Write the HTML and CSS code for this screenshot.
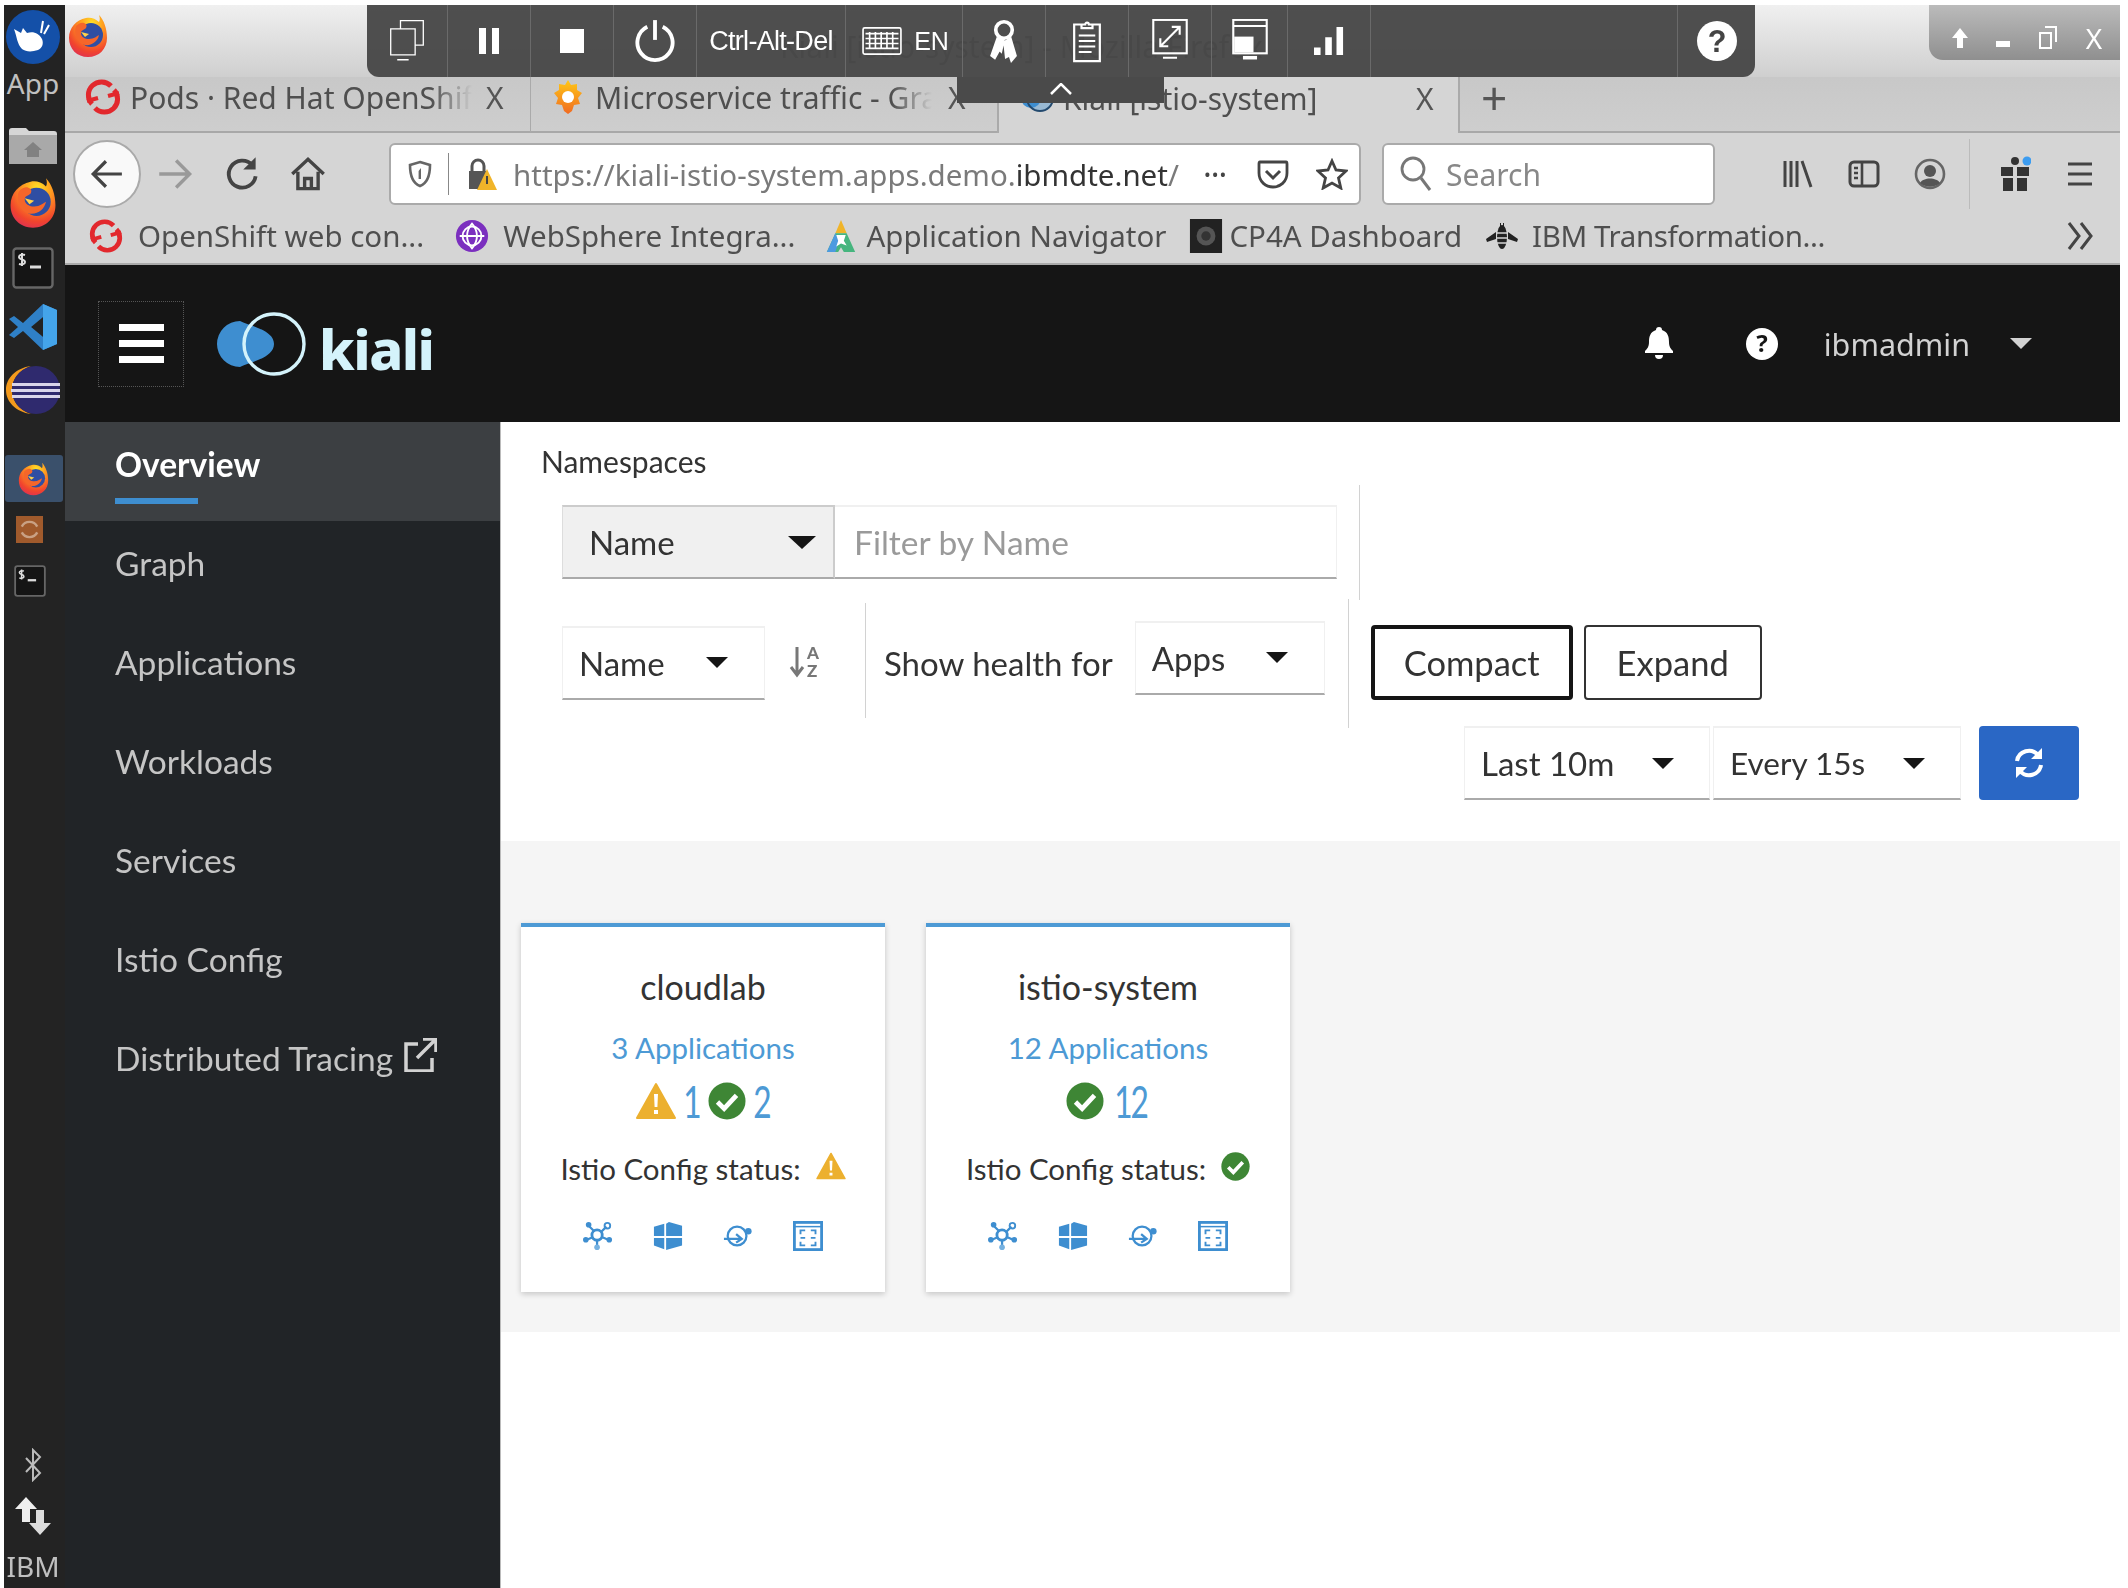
FILE: index.html
```html
<!DOCTYPE html>
<html lang="en">
<head>
    <meta charset="UTF-8">
    <meta name="viewport" content="width=device-width, initial-scale=1.0">
    <title>Kiali [istio-system]</title>
    <link rel="stylesheet" href="styles.css">
</head>
<body>
    <svg class="sprite" xmlns="http://www.w3.org/2000/svg">
        <defs>
            <radialGradient id="foxGrad" cx="0.6" cy="0.2" r="0.9">
                <stop offset="0" stop-color="#ffe226"/>
                <stop offset="0.35" stop-color="#ff9a1f"/>
                <stop offset="0.75" stop-color="#f1442d"/>
                <stop offset="1" stop-color="#d92c5d"/>
            </radialGradient>
            <linearGradient id="barGrad" x1="0" y1="0" x2="0" y2="1">
                <stop offset="0" stop-color="#ffc816"/>
                <stop offset="1" stop-color="#f06a22"/>
            </linearGradient>
            <symbol id="fox" viewBox="0 0 40 44">
                <path d="M31 1c1 3 1 5 0 7C27 4 22 3 18 4 8 6 1 14 1 24c0 11 8 19 19 19s19-8 19-19c0-9-3-18-8-23z" fill="url(#foxGrad)"/>
                <circle cx="23" cy="21" r="12" fill="#2f4ea3"/>
                <path d="M8 12c3-3 6-4 8-3 3 1 3 3 2 5-2 2-5 2-5 5 0 4 4 6 8 6 5 0 8-3 10-4-1 6-7 11-14 10C10 30 5 20 8 12z" fill="#f5662a"/>
                <path d="M13 18l8 2-4 3z" fill="#ffd24a"/>
            </symbol>
            <symbol id="openshift" viewBox="0 0 36 36">
                <path d="M7 25A13 13 0 0 1 26 7M29 11A13 13 0 0 1 10 29" fill="none" stroke="#e2282d" stroke-width="5"/>
                <path d="M2 22l11-3M23 17l11-3" stroke="#e2282d" stroke-width="4"/>
            </symbol>
            <symbol id="check" viewBox="0 0 40 40">
                <circle cx="20" cy="20" r="19.5" fill="#3e8635"/>
                <path d="M10 21l7 7 13-14" fill="none" stroke="#fff" stroke-width="5"/>
            </symbol>
            <symbol id="warn" viewBox="0 0 40 38">
                <path d="M20 2L39 36H1z" fill="#ecb02f" stroke="#ecb02f" stroke-width="2" stroke-linejoin="round"/>
                <path d="M18 12h4l-.6 13h-2.800zM18 28h4v4h-4z" fill="#fff"/>
            </symbol>
            <symbol id="nodes" viewBox="0 0 32 32">
                <circle cx="15" cy="15" r="5.500" fill="none" stroke="#3e8ed0" stroke-width="3"/>
                <path d="M6 5l6 6M25 6l-6 6M4 20l7-3M27 20l-7-3M15 28v-8" stroke="#3e8ed0" stroke-width="2.400"/>
                <circle cx="6" cy="4" r="3" fill="#3e8ed0"/><circle cx="26" cy="5" r="3" fill="none" stroke="#3e8ed0" stroke-width="2"/>
                <circle cx="3" cy="20" r="3" fill="#3e8ed0"/><circle cx="28" cy="20" r="3" fill="#3e8ed0"/><circle cx="15" cy="28" r="3" fill="#76b1e0"/>
            </symbol>
            <symbol id="cube" viewBox="0 0 32 32">
                <path d="M1 6l11-3v13H1zM14 3l3-2 14 4v11H14zM1 18h11v12L1 26zM14 18h17v8l-17 5z" fill="#3e8ed0"/>
            </symbol>
            <symbol id="orbit" viewBox="0 0 32 32">
                <circle cx="15" cy="16" r="10" fill="none" stroke="#3e8ed0" stroke-width="2.400"/>
                <path d="M1 19h18m-5-5l6 5-6 4" fill="none" stroke="#3e8ed0" stroke-width="2.400"/>
                <circle cx="27" cy="11" r="3.500" fill="#3e8ed0"/>
            </symbol>
            <symbol id="frame" viewBox="0 0 32 32">
                <rect x="1.500" y="1.500" width="29" height="29" fill="none" stroke="#3e8ed0" stroke-width="3"/>
                <path d="M2 6h28" stroke="#3e8ed0" stroke-width="1.600"/>
                <path d="M8 14v-4h5M19 10h5v4M8 18h5M19 18h5M8 22v4h5M19 26h5v-4" fill="none" stroke="#3e8ed0" stroke-width="2"/>
            </symbol>
            <symbol id="term" viewBox="0 0 42 42">
                <rect x="1.500" y="1.500" width="39" height="39" rx="3" fill="#151515" stroke="#666" stroke-width="2.400"/>
                <path d="M18 20h11" stroke="#ddd" stroke-width="3"/>
                <path d="M13 8c-3-1-6 0-6 2 0 3 6 2 6 5 0 2-3 3-6 2M10 6v13" fill="none" stroke="#ddd" stroke-width="2"/>
            </symbol>
        </defs>
    </svg>

    <!-- desktop panel on the left -->
    <aside class="dock">
        <div class="dock-top">
            <svg class="dock-app" viewBox="0 0 54 54">
                <circle cx="27" cy="27" r="27" fill="#1450a8"/>
                <path d="M8 19l7 4 2-5 4 5c6-2 12 0 15 6 2 5 0 9-4 11-6 2-12 2-16-1-5-5-5-12-8-20z" fill="#fff"/>
                <path d="M37 11l-2 12M43 15l-5 9" stroke="#fff" stroke-width="2"/>
            </svg>
            <span class="dock-label">App</span>
            <svg class="dock-folder" viewBox="0 0 50 38">
                <path d="M1 5q0-3 3-3h14l3 3h25q3 0 3 3v28H1z" fill="#d6d6d6"/>
                <path d="M1 9h48v29H1z" fill="#a9a9a9"/>
                <path d="M25 16l-9 8h3v7h12v-7h3z" fill="#818181"/>
            </svg>
            <svg class="dock-fox"><use href="#fox"/></svg>
            <svg class="dock-term"><use href="#term"/></svg>
            <svg class="dock-code" viewBox="0 0 48 46">
                <path d="M34 0l14 6v34l-14 6-20-19-9 7-5-3 9-8-9-8 5-3 9 7z" fill="#2f80c7"/>
                <path d="M34 0l14 6v34l-14 6zM34 13L22 23l12 10z" fill="#44a4ea"/>
                <path d="M34 13L22 23l12 10z" fill="#222"/>
            </svg>
            <svg class="dock-eclipse" viewBox="0 0 54 48">
                <path d="M25 0C10 2 0 12 0 24s10 22 25 24C13 44 6 35 6 24S13 4 25 0z" fill="#f39a1d"/>
                <circle cx="30" cy="24" r="24" fill="#2f2a6e"/>
                <path d="M6 17h48v3H6zM5 23h49v3H5zM6 29h48v3H6z" fill="#d9d5ea"/>
            </svg>
            <div class="dock-active"><svg class="dock-fox-small"><use href="#fox"/></svg></div>
            <div class="dock-sync">
                <svg viewBox="0 0 28 28"><path d="M6 11a9 9 0 0 1 16 0M22 17a9 9 0 0 1-16 0" fill="none" stroke="#c9a184" stroke-width="2.500"/></svg>
            </div>
            <svg class="dock-term-small"><use href="#term"/></svg>
        </div>
        <div class="dock-bottom">
            <svg class="dock-bt" viewBox="0 0 18 34"><path d="M2 10l14 15-7 7V2l7 7L2 24" fill="none" stroke="#bbb" stroke-width="2"/></svg>
            <svg class="dock-net" viewBox="0 0 38 38"><path d="M12 0l11 12h-7v13H8V12H1z" fill="#eee"/><path d="M26 38L15 26h7V13h8v13h7z" fill="#ddd"/></svg>
            <span class="dock-label dock-ibm">IBM</span>
        </div>
    </aside>

    <div class="window">
        <!-- firefox window -->
        <div class="browser">
            <div class="titlebar">
                <svg class="title-fox"><use href="#fox"/></svg>
                <span class="title-text">Kiali [istio-system] - Mozilla Firefox</span>
                <div class="win-controls">
                    <svg viewBox="0 0 18 22" class="win-up"><path d="M9 1l8 10h-5v10H6V11H1z" fill="#fff"/></svg>
                    <span class="win-min"></span>
                    <svg viewBox="0 0 20 24" class="win-restore"><path d="M7 1h11v15M2 7h11v15H2z" fill="none" stroke="#fff" stroke-width="2"/></svg>
                    <span class="win-x">X</span>
                </div>
            </div>
            <div class="tabs">
                <div class="tab tab-first">
                    <svg class="tab-icon"><use href="#openshift"/></svg>
                    <span class="tab-text">Pods · Red Hat OpenShift</span>
                    <span class="tab-close">X</span>
                </div>
                <div class="tab tab-second">
                    <svg class="tab-icon" viewBox="0 0 30 36">
                        <path d="M15 1l3 5 6-1 0 6 5 3-4 5 2 6-6 1-2 6-4 3-4-3-2-6-6-1 2-6-4-5 5-3V5l6 1z" fill="url(#barGrad)"/>
                        <circle cx="15" cy="18" r="6" fill="#fff"/>
                    </svg>
                    <span class="tab-text">Microservice traffic - Grafana</span>
                    <span class="tab-close">X</span>
                </div>
                <div class="tab tab-active">
                    <svg class="tab-icon" viewBox="0 0 36 30">
                        <circle cx="11" cy="15" r="10" fill="#3e8ed0"/><circle cx="20" cy="15" r="13" fill="#3e8ed0" fill-opacity=".4" stroke="#234a6f" stroke-width="2"/>
                    </svg>
                    <span class="tab-text">Kiali [istio-system]</span>
                    <span class="tab-close">X</span>
                </div>
                <span class="tab-new">+</span>
            </div>
            <div class="nav">
                <div class="back">
                    <svg viewBox="0 0 32 32"><path d="M30 16H4M15 4L3 16l12 12" fill="none" stroke="#444" stroke-width="3"/></svg>
                </div>
                <svg class="nav-icon forward" viewBox="0 0 32 32"><path d="M2 16h26M17 4l12 12-12 12" fill="none" stroke="#999" stroke-width="3"/></svg>
                <svg class="nav-icon reload" viewBox="0 0 32 32"><path d="M26 8a12 12 0 1 0 3 10" fill="none" stroke="#444" stroke-width="3.400"/><path d="M29 1v11H18z" fill="#444"/></svg>
                <svg class="nav-icon home" viewBox="0 0 32 32"><path d="M2 16L16 3l14 13M7 14v15h18V14M13 29v-9h6v9" fill="none" stroke="#444" stroke-width="3"/></svg>
                <div class="urlbar">
                    <svg class="url-shield" viewBox="0 0 24 28"><path d="M12 2l10 3c0 10-2 18-10 21C4 23 2 15 2 5z" fill="none" stroke="#666" stroke-width="2.600"/><path d="M13 8v11h-2.400V11z" fill="#666"/></svg>
                    <span class="url-sep"></span>
                    <svg class="url-lock" viewBox="0 0 30 34"><path d="M5 14V9a6 6 0 0 1 12 0v5" fill="none" stroke="#555" stroke-width="3"/><path d="M2 14h18v18H2z" fill="#555"/><path d="M20 12l10 21H10z" fill="#f0b429"/><path d="M19 19h2v8h-2z" fill="#444"/></svg>
                    <span class="url-text">https://kiali-istio-system.apps.demo.<b>ibmdte.net</b>/</span>
                    <span class="url-dots">•••</span>
                    <svg class="url-icon url-pocket" viewBox="0 0 32 32"><path d="M3 4h26q1 0 1 2v9c0 9-7 14-14 14S2 24 2 15V6q0-2 1-2z" fill="none" stroke="#444" stroke-width="2.800"/><path d="M9 13l7 7 7-7" fill="none" stroke="#444" stroke-width="3"/></svg>
                    <svg class="url-icon url-star" viewBox="0 0 32 32"><path d="M16 3l4 9 10 1-7.500 7 2.300 10L16 25l-8.800 5 2.300-10L2 13l10-1z" fill="none" stroke="#444" stroke-width="2.800"/></svg>
                </div>
                <div class="searchbar">
                    <svg class="search-icon" viewBox="0 0 32 36"><circle cx="13" cy="13" r="11" fill="none" stroke="#777" stroke-width="2.800"/><path d="M21 22l9 12" stroke="#777" stroke-width="3"/></svg>
                    <span>Search</span>
                </div>
                <svg class="tool-icon tool-first" viewBox="0 0 32 32"><path d="M3 3v26M9 3v26M15 3v26M20 3l9 26" fill="none" stroke="#444" stroke-width="3"/></svg>
                <svg class="tool-icon" viewBox="0 0 32 32"><rect x="2" y="4" width="28" height="24" rx="4" fill="none" stroke="#444" stroke-width="3"/><path d="M14 4v24M6 10h4M6 15h4M6 20h4" stroke="#444" stroke-width="2.600"/></svg>
                <svg class="tool-icon" viewBox="0 0 32 32"><circle cx="16" cy="16" r="14" fill="none" stroke="#666" stroke-width="2.600"/><circle cx="16" cy="13" r="6" fill="#555"/><path d="M6 25c3-6 17-6 20 0-6 5-14 5-20 0z" fill="#555"/></svg>
                <span class="tool-sep"></span>
                <div class="gift">
                    <svg class="tool-icon" viewBox="0 0 32 36"><path d="M2 11h12v9H2zM18 11h12v9H18zM4 22h10v13H4zM18 22h10v13H18z" fill="#333"/><circle cx="16" cy="5" r="4" fill="#333"/><circle cx="28" cy="5" r="4.500" fill="#3c9cf0"/></svg>
                </div>
                <svg class="tool-icon tool-menu" viewBox="0 0 32 32"><path d="M4 6h24M4 16h24M4 26h24" stroke="#444" stroke-width="3.200"/></svg>
            </div>
            <div class="bookmarks">
                <div class="bm bm-1"><svg class="bm-icon"><use href="#openshift"/></svg><span>OpenShift web con...</span></div>
                <div class="bm bm-2">
                    <svg class="bm-icon" viewBox="0 0 36 36"><circle cx="18" cy="18" r="17" fill="#7b2fbf"/><circle cx="18" cy="18" r="10" fill="none" stroke="#fff" stroke-width="2"/><path d="M18 5c-7 8-7 18 0 26 7-8 7-18 0-26zM5 18h26" fill="none" stroke="#fff" stroke-width="2"/></svg>
                    <span>WebSphere Integra...</span>
                </div>
                <div class="bm bm-3">
                    <svg class="bm-icon" viewBox="0 0 30 36"><path d="M15 1l6 14H9z" fill="#f0b429"/><path d="M9 15h12l9 20H18l-3-5-3 5H0z" fill="#46b57e"/><path d="M0 35l9-20 4 8-4 12z" fill="#4d9ae0"/><path d="M10 17h10l-2 6 3 5-6-2-5 3 2-6z" fill="#fff"/></svg>
                    <span>Application Navigator</span>
                </div>
                <div class="bm bm-4">
                    <svg class="bm-icon" viewBox="0 0 34 36"><rect width="34" height="36" fill="#222"/><circle cx="17" cy="18" r="10" fill="#555"/><circle cx="17" cy="18" r="5" fill="#333"/></svg>
                    <span>CP4A Dashboard</span>
                </div>
                <div class="bm bm-5">
                    <svg class="bm-icon" viewBox="0 0 34 28"><ellipse cx="17" cy="15" rx="5" ry="12" fill="#222"/><path d="M11 11h12M11 16h12M12 21h10" stroke="#d5d5d5" stroke-width="1.600"/><path d="M11 10L1 17l1 3 9-3zM23 10l10 7-1 3-9-3zM15 1h1v4h-1zM18 1h1v4h-1z" fill="#222"/></svg>
                    <span>IBM Transformation...</span>
                </div>
                <svg class="bm-more" viewBox="0 0 30 32"><path d="M3 3l10 13L3 29M15 3l10 13-10 13" fill="none" stroke="#444" stroke-width="3"/></svg>
            </div>
        </div>

        <!-- kiali page -->
        <header class="masthead">
            <div class="burger"><span></span><span></span><span></span></div>
            <svg class="logo" viewBox="0 0 92 64">
                <path d="M24 9A22 22 0 1 0 24 55C34 50 58 46 58 32S34 14 24 9z" fill="#3e8ed0"/>
                <circle cx="58" cy="32" r="30" fill="none" stroke="#d4f3fb" stroke-width="3.400"/>
            </svg>
            <span class="logo-text">kiali</span>
            <svg class="head-bell" viewBox="0 0 30 34"><path d="M15 0a3 3 0 0 1 3 3c6 2 7 7 7 12 0 5 2 7 4 9v2H1v-2c2-2 4-4 4-9 0-5 1-10 7-12a3 3 0 0 1 3-3zM11 28h8a4 4 0 0 1-8 0z" fill="#fff"/></svg>
            <svg class="head-help" viewBox="0 0 32 32"><circle cx="16" cy="16" r="16" fill="#fff"/><text x="16" y="24" class="help-mark">?</text></svg>
            <span class="head-user">ibmadmin</span>
            <span class="caret caret-light"></span>
        </header>
        <div class="body-row">
            <nav class="sidebar">
                <a class="side-item side-current"><span class="side-label">Overview</span></a>
                <a class="side-item">Graph</a>
                <a class="side-item">Applications</a>
                <a class="side-item">Workloads</a>
                <a class="side-item">Services</a>
                <a class="side-item">Istio Config</a>
                <a class="side-item">Distributed Tracing
                    <svg class="side-ext" viewBox="0 0 34 34"><path d="M15 6H3v27h26V20" fill="none" stroke="#d2d2d2" stroke-width="3.500"/><path d="M20 1h13v13M32 2L14 20" fill="none" stroke="#d2d2d2" stroke-width="3.500"/></svg>
                </a>
            </nav>
            <main class="content">
                <div class="controls">
                    <div class="crumb">Namespaces</div>
                    <div class="filter-row">
                        <div class="filter-type">Name <span class="caret caret-big"></span></div>
                        <div class="filter-input">Filter by Name</div>
                        <span class="vline vline-filter"></span>
                    </div>
                    <div class="sort-row">
                        <div class="select select-sort">Name <span class="caret"></span></div>
                        <svg class="sort-icon" viewBox="0 0 30 34"><path d="M8 2v26M2 22l6 8 6-8" fill="none" stroke="#777" stroke-width="3"/><text x="18" y="14" class="sort-a">A</text><text x="18" y="32" class="sort-a">Z</text></svg>
                        <span class="vline vline-sort"></span>
                        <span class="health-label">Show health for</span>
                        <div class="select select-apps">Apps <span class="caret"></span></div>
                        <span class="vline vline-view"></span>
                        <button class="view-btn view-on">Compact</button>
                        <button class="view-btn view-off">Expand</button>
                    </div>
                    <div class="time-row">
                        <div class="select select-time">Last 10m <span class="caret"></span></div>
                        <div class="select select-every">Every 15s <span class="caret"></span></div>
                        <button class="refresh">
                            <svg viewBox="0 0 34 34"><path d="M5 15A12 12 0 0 1 26 9M29 19A12 12 0 0 1 8 25" fill="none" stroke="#fff" stroke-width="4"/><path d="M30 2v11H19zM4 32V21h11z" fill="#fff"/></svg>
                        </button>
                    </div>
                </div>
                <section class="cards">
                    <article class="card">
                        <h3>cloudlab</h3>
                        <div class="card-apps">3 Applications</div>
                        <div class="card-health">
                            <svg class="h-warn"><use href="#warn"/></svg><span>1</span>
                            <svg class="h-ok"><use href="#check"/></svg><span>2</span>
                        </div>
                        <div class="card-config">Istio Config status: <svg class="c-warn"><use href="#warn"/></svg></div>
                        <div class="card-links">
                            <svg><use href="#nodes"/></svg><svg><use href="#cube"/></svg><svg><use href="#orbit"/></svg><svg><use href="#frame"/></svg>
                        </div>
                    </article>
                    <article class="card">
                        <h3>istio-system</h3>
                        <div class="card-apps">12 Applications</div>
                        <div class="card-health">
                            <svg class="h-ok"><use href="#check"/></svg><span>12</span>
                        </div>
                        <div class="card-config">Istio Config status: <svg class="c-ok"><use href="#check"/></svg></div>
                        <div class="card-links">
                            <svg><use href="#nodes"/></svg><svg><use href="#cube"/></svg><svg><use href="#orbit"/></svg><svg><use href="#frame"/></svg>
                        </div>
                    </article>
                </section>
            </main>
        </div>
    </div>

    <!-- remote console toolbar over the window -->
    <div class="console">
        <span class="con-cell con-w"><svg viewBox="0 0 44 54" class="con-icon"><path d="M14 12V2h28v30H32M2 12h30v32H2zM10 50h14" fill="none" stroke="#fff" stroke-width="1.600"/></svg></span>
        <span class="con-cell"><span class="con-pause"></span></span>
        <span class="con-cell"><span class="con-stop"></span></span>
        <span class="con-cell"><svg viewBox="0 0 36 40" class="con-icon"><path d="M11 7a16 16 0 1 0 14 0" fill="none" stroke="#fff" stroke-width="3.500"/><path d="M18 1v18" stroke="#fff" stroke-width="3.500"/></svg></span>
        <span class="con-cell con-text">Ctrl-Alt-Del</span>
        <span class="con-cell con-kbd">
            <svg viewBox="0 0 48 34" class="con-kbd-icon"><rect x="1" y="1" width="46" height="32" rx="2" fill="none" stroke="#fff" stroke-width="2"/><path d="M4 8h40M4 14h40M4 20h40M4 26h40M9 6v20M16 6v20M23 6v20M30 6v20M37 6v20" stroke="#fff" stroke-width="2"/></svg>
            EN
        </span>
        <span class="con-cell"><svg viewBox="0 0 34 48" class="con-icon"><circle cx="17" cy="12" r="9" fill="none" stroke="#fff" stroke-width="4"/><path d="M10 20L3 40l4 3 5-9 2 2 3-14M24 20l6 20-5 6-2-6-4 2-2-18" fill="#fff" stroke="#fff" stroke-width="2"/></svg></span>
        <span class="con-cell"><svg viewBox="0 0 32 48" class="con-icon"><path d="M10 6H2v40h28V6h-8M10 10V6h4a2 2 0 0 1 4 0h4v4zM7 18h18M7 24h18M7 30h18M7 36h14" fill="none" stroke="#fff" stroke-width="2.400"/></svg></span>
        <span class="con-cell"><svg viewBox="0 0 40 50" class="con-icon"><rect x="1" y="1" width="38" height="38" fill="none" stroke="#fff" stroke-width="2.400"/><path d="M10 30L30 10M22 9h9v9M9 22v9h9M12 44h16" fill="none" stroke="#fff" stroke-width="2.400"/></svg></span>
        <span class="con-cell con-n"><svg viewBox="0 0 40 50" class="con-icon"><rect x="1" y="1" width="38" height="38" fill="none" stroke="#fff" stroke-width="2.400"/><path d="M1 8h38" stroke="#fff" stroke-width="2.400"/><path d="M2 20h22v18H2z" fill="#fff"/><path d="M12 44h16" stroke="#fff" stroke-width="4"/></svg></span>
        <span class="con-cell"><svg viewBox="0 0 34 32" class="con-bars"><path d="M1 23h7v8H1zM13 12h7v19h-7zM25 1h7v30h-7z" fill="#fff"/></svg></span>
        <span class="con-spacer"></span>
        <span class="con-cell con-help"><svg viewBox="0 0 34 34" class="con-icon"><circle cx="17" cy="17" r="17" fill="#fff"/><text x="17" y="26" class="help-mark help-mark-dark">?</text></svg></span>
    </div>
    <div class="console-tab"><svg viewBox="0 0 22 12"><path d="M1 11L11 1l10 10" fill="none" stroke="#fff" stroke-width="2.500"/></svg></div>
</body>
</html>
```

FILE: styles.css
```css
html, body {
    margin: 0;
    height: 100%;
}

body {
    display: flex;
    width: 2128px;
    height: 1588px;
    padding: 5px 8px 0 4px;
    box-sizing: border-box;
    background-color: #fff;
    overflow: hidden;
    font-family: "Noto Sans", sans-serif;
    /* the source is a scaled-up remote desktop capture */
    filter: blur(0.5px);
}

.sprite {
    width: 0;
    height: 0;
    flex: none;
}

/* desktop dock */
.dock {
    width: 61px;
    flex: none;
    box-sizing: border-box;
    padding-right: 3px;
    background-color: #232323;
    display: flex;
    flex-direction: column;
    justify-content: space-between;
    align-items: center;
}

.dock-top, .dock-bottom {
    display: flex;
    flex-direction: column;
    align-items: center;
    width: 100%;
}

.dock-app {
    width: 54px;
    height: 54px;
    margin-top: 5px;
}

.dock-label {
    color: #c0c0c0;
    font-size: 28px;
    line-height: 30px;
    margin-top: 4px;
}

.dock-folder {
    width: 50px;
    height: 38px;
    margin-top: 28px;
}

.dock-fox {
    width: 50px;
    height: 52px;
    margin-top: 13px;
}

.dock-term {
    width: 42px;
    height: 42px;
    margin-top: 18px;
}

.dock-code {
    width: 48px;
    height: 46px;
    margin-top: 15px;
}

.dock-eclipse {
    width: 54px;
    height: 48px;
    margin-top: 16px;
}

.dock-active {
    width: 58px;
    height: 47px;
    margin-top: 41px;
    margin-left: 1px;
    background-color: #3a506b;
    border-radius: 3px;
    display: flex;
    align-items: center;
    justify-content: center;
}

.dock-fox-small {
    width: 33px;
    height: 34px;
}

.dock-sync {
    width: 27px;
    height: 27px;
    margin-top: 14px;
    margin-right: 8px;
    background-color: #a05a2c;
    display: flex;
}

.dock-term-small {
    width: 32px;
    height: 32px;
    margin-top: 22px;
    margin-right: 6px;
}

.dock-bt {
    width: 18px;
    height: 34px;
}

.dock-net {
    width: 38px;
    height: 38px;
    margin-top: 15px;
}

.dock-ibm {
    font-size: 28px;
    margin-top: 16px;
    margin-bottom: 7px;
}

/* window */
.window {
    flex: 1;
    display: flex;
    flex-direction: column;
    min-width: 0;
}

.browser {
    height: 260px;
    flex: none;
    background-color: #d5d5d5;
    color: #4f4f4f;
    border-bottom: 2px solid #aaa;
    box-sizing: border-box;
}

.titlebar {
    height: 72px;
    display: flex;
    align-items: flex-start;
    background: linear-gradient(#f0f0f0, #cfcfcf);
}

.title-fox {
    width: 40px;
    height: 44px;
    margin: 9px 0 0 3px;
    flex: none;
}

.title-text {
    margin: 22px 0 0 672px;
    font-size: 30px;
    line-height: 40px;
    color: #777;
    white-space: nowrap;
}

.win-controls {
    margin-left: auto;
    width: 191px;
    height: 55px;
    box-sizing: border-box;
    display: flex;
    align-items: center;
    justify-content: space-around;
    padding: 10px 4px 0 8px;
    border-radius: 0 0 0 14px;
    background: linear-gradient(#bbb, #8f8f8f);
    color: #fff;
}

.win-up {
    width: 18px;
    height: 22px;
}

.win-min {
    width: 14px;
    height: 6px;
    margin-top: 12px;
    background-color: #fff;
}

.win-restore {
    width: 20px;
    height: 24px;
}

.win-x {
    font-size: 28px;
    line-height: 30px;
}

.tabs {
    height: 56px;
    display: flex;
    align-items: stretch;
    background: linear-gradient(#c8c8c8, #cecece);
    font-size: 30px;
    white-space: nowrap;
}

.tab {
    display: flex;
    align-items: center;
    box-sizing: border-box;
    padding-bottom: 14px;
    border-bottom: 2px solid #a8a8a8;
    overflow: hidden;
}

.tab-first {
    width: 466px;
    padding-left: 20px;
    border-right: 1px solid #aaa;
}

.tab-second {
    width: 466px;
    padding-left: 19px;
}

.tab-active {
    width: 463px;
    padding-left: 21px;
    border-bottom: none;
    background-color: #d5d5d5;
    border-left: 2px solid #aaa;
    border-right: 2px solid #aaa;
}

.tab-icon {
    width: 36px;
    height: 36px;
    flex: none;
}

.tab-text {
    width: 342px;
    flex: none;
    margin-left: 9px;
    overflow: hidden;
    -webkit-mask-image: linear-gradient(to right, #000 88%, transparent 100%);
    mask-image: linear-gradient(to right, #000 88%, transparent 100%);
}

.tab-second .tab-text {
    margin-left: 9px;
    width: 337px;
}

.tab-close {
    flex: none;
    margin-left: 14px;
    color: #555;
}

.tab-second .tab-close {
    margin-left: 16px;
}

.tab-active .tab-text {
    margin-left: 7px;
    width: 339px;
    -webkit-mask-image: none;
    mask-image: none;
}

.tab-new {
    flex: 1;
    padding-left: 21px;
    font-size: 46px;
    line-height: 40px;
    color: #555;
    border-bottom: 2px solid #a8a8a8;
}

.nav {
    height: 82px;
    display: flex;
    align-items: center;
    padding-left: 8px;
}

.back {
    width: 68px;
    height: 68px;
    box-sizing: border-box;
    border: 2px solid #aaa;
    border-radius: 50%;
    background-color: #f9f9f9;
    display: flex;
    align-items: center;
    justify-content: center;
    flex: none;
}

.back svg {
    width: 34px;
    height: 34px;
}

.nav-icon {
    width: 36px;
    height: 36px;
    flex: none;
}

.forward {
    margin-left: 16px;
}

.reload {
    margin-left: 30px;
}

.home {
    margin-left: 31px;
}

.urlbar {
    width: 972px;
    height: 62px;
    margin-left: 63px;
    flex: none;
    box-sizing: border-box;
    background-color: #fff;
    border: 2px solid #aaa;
    border-radius: 6px;
    display: flex;
    align-items: center;
    font-size: 29.500px;
    color: #7a7a7a;
    white-space: nowrap;
}

.url-text b {
    font-weight: 400;
    color: #333;
}

.url-shield {
    width: 24px;
    height: 28px;
    margin-left: 17px;
    flex: none;
}

.url-sep {
    width: 1px;
    height: 42px;
    margin-left: 16px;
    background-color: #888;
}

.url-lock {
    width: 30px;
    height: 34px;
    margin-left: 18px;
    flex: none;
}

.url-text {
    margin-left: 16px;
    width: 676px;
    flex: none;
    overflow: hidden;
}

.url-dots {
    margin-left: 15px;
    font-size: 18px;
    letter-spacing: 1px;
    color: #444;
}

.url-icon {
    width: 32px;
    height: 32px;
    flex: none;
}

.url-pocket {
    margin-left: 30px;
}

.url-star {
    margin-left: 27px;
}

.searchbar {
    width: 333px;
    height: 62px;
    margin-left: 21px;
    flex: none;
    box-sizing: border-box;
    background-color: #fff;
    border: 2px solid #aaa;
    border-radius: 6px;
    display: flex;
    align-items: center;
    padding-left: 16px;
    font-size: 30px;
    color: #888;
}

.search-icon {
    width: 32px;
    height: 36px;
    margin-right: 14px;
}

.tool-icon {
    width: 32px;
    height: 32px;
    flex: none;
    margin-left: 34px;
}

.tool-first {
    margin-left: 67px;
}

.tool-sep {
    width: 1px;
    height: 70px;
    margin-left: 23px;
    background-color: #bbb;
}

.gift .tool-icon {
    margin-left: 29px;
    height: 36px;
    display: block;
}

.tool-menu {
    margin-left: 33px;
}

.bookmarks {
    height: 48px;
    display: flex;
    align-items: center;
    padding-bottom: 7px;
    box-sizing: border-box;
    font-size: 29.500px;
    white-space: nowrap;
}

.bm {
    display: flex;
    align-items: center;
    flex: none;
}

.bm-icon {
    width: 34px;
    height: 34px;
    flex: none;
}

.bm-1 {
    margin-left: 24px;
    gap: 15px;
}

.bm-2 {
    margin-left: 31px;
    gap: 14px;
}

.bm-3 {
    margin-left: 29px;
    gap: 8px;
}

.bm-4 {
    margin-left: 23px;
    gap: 6px;
}

.bm-5 {
    margin-left: 23px;
    gap: 13px;
    letter-spacing: -0.4px;
}

.bm-more {
    width: 30px;
    height: 32px;
    margin-left: auto;
    margin-right: 24px;
}

/* kiali masthead */
.masthead {
    height: 157px;
    flex: none;
    background-color: #151515;
    display: flex;
    align-items: center;
    color: #d2d2d2;
}

.burger {
    width: 86px;
    height: 86px;
    margin-left: 33px;
    box-sizing: border-box;
    border: 1px dotted #555;
    display: flex;
    flex-direction: column;
    align-items: center;
    justify-content: center;
    gap: 9px;
}

.burger span {
    width: 45px;
    height: 7px;
    background-color: #fff;
}

.logo {
    width: 92px;
    height: 64px;
    margin-left: 32px;
}

.logo-text {
    margin: 8px 0 0 11px;
    font-size: 56px;
    line-height: 60px;
    font-weight: 800;
    color: #d4f3fb;
    letter-spacing: -1.5px;
}

.head-bell {
    width: 30px;
    height: 34px;
    margin-left: auto;
}

.head-help {
    width: 32px;
    height: 32px;
    margin-left: 72px;
}

.help-mark {
    font-size: 24px;
    font-weight: 700;
    text-anchor: middle;
    fill: #151515;
}

.help-mark-dark {
    font-size: 26px;
    fill: #444;
}

.head-user {
    margin-left: 46px;
    font-size: 30.500px;
}

.caret {
    display: inline-block;
    width: 0;
    height: 0;
    border-left: 11px solid transparent;
    border-right: 11px solid transparent;
    border-top: 11px solid #151515;
}

.caret-light {
    border-top-color: #d2d2d2;
    margin-left: 40px;
    margin-right: 88px;
}

.caret-big {
    border-left-width: 14px;
    border-right-width: 14px;
    border-top-width: 13px;
}

/* sidebar and main */
.body-row {
    flex: 1;
    display: flex;
    min-height: 0;
}

.sidebar {
    width: 435px;
    flex: none;
    background-color: #212427;
    color: #c5c5c5;
    font-size: 33.500px;
    font-family: "Lato", sans-serif;
}

.side-item {
    height: 99px;
    box-sizing: border-box;
    display: flex;
    align-items: center;
    padding: 0 0 16px 50px;
    gap: 10px;
    line-height: 40px;
    white-space: nowrap;
}

.side-current {
    background-color: #3c3f42;
    color: #fff;
    font-weight: 700;
}

.side-label {
    position: relative;
}

.side-label::after {
    content: "";
    position: absolute;
    left: 0;
    width: 83px;
    top: 54px;
    height: 6px;
    background-color: #3e8ed0;
}

.side-ext {
    width: 34px;
    height: 34px;
    margin-top: -6px;
}

.content {
    flex: 1;
    min-width: 0;
    display: flex;
    flex-direction: column;
    border-left: 1px solid #bbb;
    font-family: "Lato", sans-serif;
    color: #333;
}

.controls {
    height: 419px;
    flex: none;
    padding: 0 41px 0 40px;
    box-sizing: border-box;
    font-size: 31px;
}

.crumb {
    padding-top: 21px;
    font-size: 30px;
    line-height: 36px;
}

.filter-row {
    display: flex;
    margin: 26px 0 0 21px;
    height: 74px;
}

.filter-type {
    width: 273px;
    box-sizing: border-box;
    padding: 0 17px 0 26px;
    background-color: #f0f0f0;
    border-top: 2px solid #ccc;
    border-bottom: 2px solid #aaa;
    border-left: 1px solid #ddd;
    border-right: 2px solid #ccc;
    display: flex;
    align-items: center;
    justify-content: space-between;
    font-size: 33px;
}

.filter-input {
    width: 502px;
    box-sizing: border-box;
    padding-left: 19px;
    border-top: 2px solid #f0f0f0;
    border-right: 1px solid #f0f0f0;
    border-bottom: 2px solid #aaa;
    display: flex;
    align-items: center;
    color: #9a9a9a;
    font-size: 33.500px;
}

.vline {
    width: 1px;
    flex: none;
    background-color: #d2d2d2;
}

.vline-filter {
    height: 115px;
    margin: -20px 0 0 22px;
}

.sort-row {
    display: flex;
    align-items: center;
    margin: 19px 0 0 21px;
    height: 115px;
}

.select {
    box-sizing: border-box;
    height: 74px;
    display: flex;
    align-items: center;
    justify-content: space-between;
    flex: none;
    border-top: 2px solid #f0f0f0;
    border-left: 1px solid #f0f0f0;
    border-right: 1px solid #f0f0f0;
    border-bottom: 2px solid #aaa;
    font-size: 33px;
}

.select-sort {
    width: 203px;
    padding: 0 36px 0 16px;
    margin-top: 14px;
}

.sort-icon {
    width: 30px;
    height: 34px;
    margin: 12px 0 0 24px;
}

.sort-a {
    font-size: 17px;
    font-weight: 900;
    fill: #777;
}

.vline-sort {
    height: 115px;
    margin: 10px 0 0 46px;
}

.health-label {
    margin: 14px 0 0 18px;
    white-space: nowrap;
    font-size: 33px;
}

.select-apps {
    width: 190px;
    padding: 0 36px 0 16px;
    margin: 4px 0 0 22px;
}

.vline-view {
    height: 129px;
    margin: 16px 0 0 23px;
}

.view-btn {
    height: 75px;
    box-sizing: border-box;
    margin-top: 14px;
    background-color: #fff;
    color: #333;
    border-radius: 4px;
    font-family: inherit;
    font-size: 34.500px;
    padding: 0;
}

.view-on {
    width: 202px;
    margin-left: 22px;
    border: 4px solid #151515;
}

.view-off {
    width: 178px;
    margin-left: 11px;
    border: 2px solid #333;
}

.time-row {
    display: flex;
    justify-content: flex-end;
    margin-top: 13px;
    height: 74px;
    gap: 3px;
}

.select-time {
    width: 246px;
    padding: 0 35px 0 16px;
}

.select-every {
    width: 248px;
    padding: 0 35px 0 16px;
    margin-right: 15px;
    font-size: 31.500px;
}

.refresh {
    width: 100px;
    height: 74px;
    background-color: #2a67c5;
    border: none;
    border-radius: 4px;
    padding: 0;
}

.refresh svg {
    width: 34px;
    height: 34px;
    display: block;
    margin: 0 auto;
}

/* namespace cards */
.cards {
    height: 491px;
    flex: none;
    box-sizing: border-box;
    background-color: #f5f5f5;
    padding: 82px 0 0 20px;
    display: flex;
    gap: 41px;
}

.card {
    width: 364px;
    height: 369px;
    box-sizing: border-box;
    background-color: #fff;
    border-top: 4px solid #4d9ad5;
    box-shadow: 0 2px 6px rgba(0, 0, 0, 0.2);
    text-align: center;
}

.card h3 {
    margin: 41px 0 0;
    font-size: 34px;
    font-weight: 400;
    line-height: 38px;
    color: #333;
}

.card-apps {
    margin-top: 23px;
    font-size: 29.500px;
    line-height: 38px;
    color: #4d9ad5;
}

.card-health {
    margin-top: 13px;
    height: 42px;
    display: flex;
    justify-content: center;
    align-items: center;
    gap: 8px;
    font-size: 44px;
    font-weight: 400;
    letter-spacing: -3px;
    color: #4d9ad5;
}

/* the digits in the source are narrower than Lato's */
.card-health span {
    display: inline-block;
    transform: scaleX(0.72);
    margin: 0 -3px 0 -4px;
}

.h-warn {
    width: 40px;
    height: 38px;
}

.h-ok {
    width: 38px;
    height: 38px;
}

.card-config {
    margin-top: 27px;
    display: flex;
    justify-content: center;
    align-items: center;
    gap: 7px;
    font-size: 29.500px;
    line-height: 40px;
    color: #333;
}

.c-warn {
    width: 30px;
    height: 28px;
    margin: -6px 0 0 8px;
}

.c-ok {
    width: 29px;
    height: 29px;
    margin: -6px 0 0 8px;
}

.card-links {
    margin-top: 32px;
    display: flex;
    justify-content: center;
    gap: 40px;
}

.card-links svg {
    width: 30px;
    height: 30px;
}

/* remote console overlay */
.console {
    position: absolute;
    left: 367px;
    top: 5px;
    width: 1388px;
    height: 72px;
    display: flex;
    box-sizing: border-box;
    background-color: rgba(70, 70, 70, 0.95);
    border-radius: 0 0 12px 12px;
    color: #fff;
    font-family: "Liberation Sans", sans-serif;
}

.con-cell {
    width: 83px;
    flex: none;
    border-right: 1px solid #6a6a6a;
    display: flex;
    align-items: center;
    justify-content: center;
    box-sizing: border-box;
}

.con-w {
    width: 81px;
}

.con-icon {
    width: 40px;
    height: 44px;
}

.con-pause {
    width: 20px;
    height: 26px;
    border-left: 7px solid #fff;
    border-right: 7px solid #fff;
    box-sizing: border-box;
}

.con-stop {
    width: 24px;
    height: 24px;
    background-color: #fff;
}

.con-text {
    width: 149px;
    font-size: 27px;
    letter-spacing: -0.7px;
    white-space: nowrap;
}

.con-kbd {
    width: 117px;
    font-size: 25px;
    gap: 9px;
}

.con-kbd-icon {
    width: 46px;
    height: 28px;
}

.con-n {
    width: 76px;
}

.con-bars {
    width: 34px;
    height: 30px;
}

.con-spacer {
    width: 306px;
    flex: none;
    border-right: 1px solid #6a6a6a;
}

.con-help {
    border-right: none;
    padding-right: 6px;
}

.console-tab {
    position: absolute;
    left: 957px;
    top: 77px;
    width: 207px;
    height: 26px;
    background-color: #4a4a4a;
    display: flex;
    justify-content: center;
}

.console-tab svg {
    width: 22px;
    height: 12px;
    margin-top: 6px;
}
```
